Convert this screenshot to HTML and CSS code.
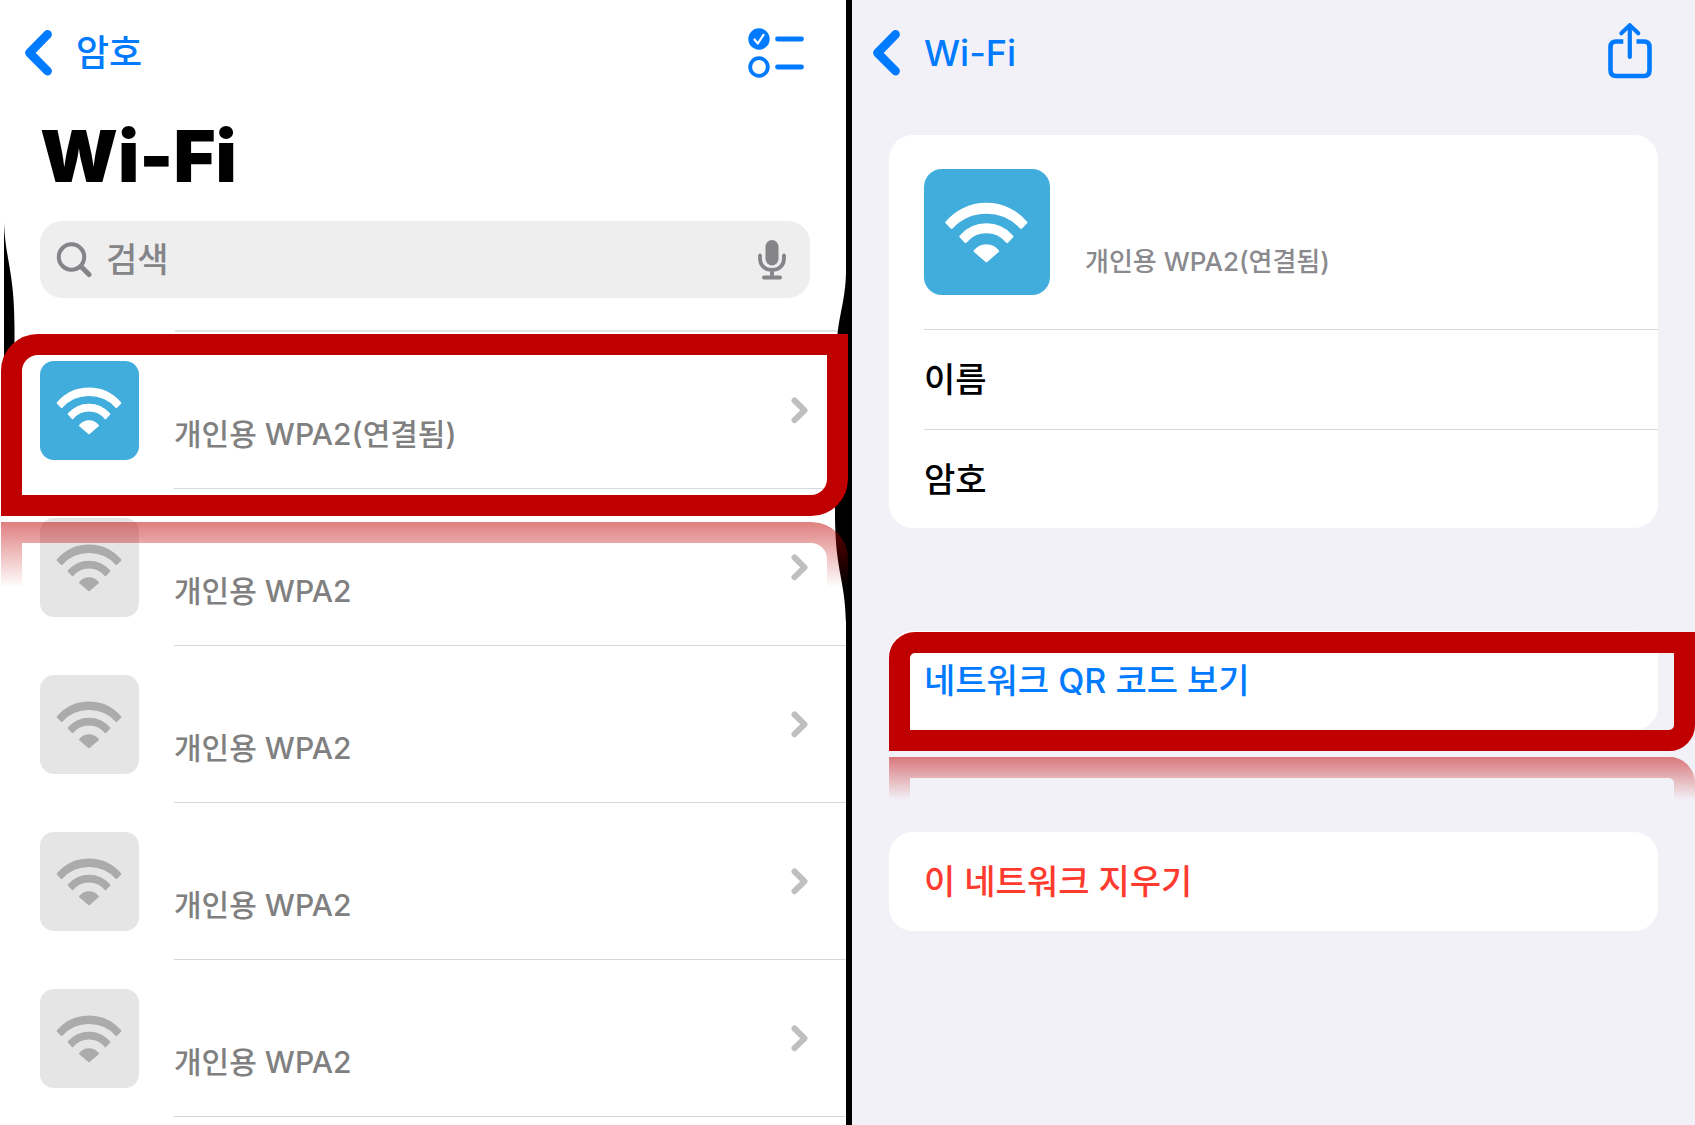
FILE: index.html
```
<!DOCTYPE html>
<html lang="ko">
<head>
    <meta charset="UTF-8">
    <meta name="viewport" content="width=device-width, initial-scale=1.0">
    <title>Wi-Fi 암호</title>
    <link rel="stylesheet" href="styles.css">
</head>
<body>
    <svg class="symbols" aria-hidden="true">
        <symbol id="icon-wifi" viewBox="0 0 99 99">
            <path d="M17.700 42A41 41 0 0 1 80.300 42L76.300 46A37.300 37.300 0 0 0 21.700 46Z"/>
            <path d="M28.700 53A26.700 26.700 0 0 1 69.300 53L65.300 57.200A21.200 21.200 0 0 0 32.700 57.200Z"/>
            <path d="M40 64.500A11.500 11.500 0 0 1 58 64.500L49 72.300Z"/>
        </symbol>
        <symbol id="icon-back" viewBox="0 0 27 46">
            <path d="M22.500 4.500L4.500 22.800L22.500 41" fill="none" stroke="currentColor" stroke-width="8.800" stroke-linecap="round" stroke-linejoin="round"/>
        </symbol>
        <symbol id="icon-next" viewBox="0 0 17 27">
            <path d="M3.500 3.500L13.500 13.300L3.500 23.200" fill="none" stroke="currentColor" stroke-width="6" stroke-linecap="round" stroke-linejoin="round"/>
        </symbol>
    </svg>

    <main class="screens">
        <!-- 네트워크 목록 -->
        <section class="screen screen-list">
            <nav class="navbar">
                <a class="back" href="#">
                    <svg class="back-icon"><use href="#icon-back"/></svg>
                    <span>암호</span>
                </a>
                <button class="nav-button" type="button" aria-label="선택">
                    <svg width="56" height="50" viewBox="0 0 56 50" fill="none" stroke="currentColor" stroke-linecap="round" stroke-linejoin="round">
                        <circle cx="11" cy="11" r="10.700" fill="currentColor" stroke="none"/>
                        <path d="M6.500 11.500L9.800 15.500L15.500 6.800" stroke="#fff" stroke-width="2.200"/>
                        <circle cx="11" cy="39" r="8.800" stroke-width="3.800"/>
                        <path d="M29.500 11H53.500M29.500 39H53.500" stroke-width="4.800"/>
                    </svg>
                </button>
            </nav>

            <h1>Wi-Fi</h1>

            <label class="search">
                <svg width="36" height="36" viewBox="0 0 36 36" fill="none" stroke="currentColor" stroke-linecap="round">
                    <circle cx="15.500" cy="15" r="12.700" stroke-width="4"/>
                    <path d="M25 24.500L33 32.500" stroke-width="5"/>
                </svg>
                <input type="search" placeholder="검색" aria-label="검색">
                <svg width="28" height="40" viewBox="0 0 28 40" fill="none" stroke="currentColor" stroke-linecap="round">
                    <rect x="7.500" y="0" width="13" height="25.500" rx="6.500" fill="currentColor" stroke="none"/>
                    <path d="M2 15.500V18.500C2 25.500 7 29.800 14 29.800C21 29.800 26 25.500 26 18.500V15.500M14 31V37" stroke-width="3.800"/>
                    <path d="M6 37.500H22" stroke-width="4"/>
                </svg>
            </label>

            <ul class="networks">
                <li class="network">
                    <a href="#">
                        <svg class="tile tile-on"><use href="#icon-wifi"/></svg>
                        <span class="network-body">
                            <span class="network-type">개인용 WPA2(연결됨)</span>
                            <svg class="next-icon"><use href="#icon-next"/></svg>
                        </span>
                    </a>
                    <div class="marker marker-network"></div>
                </li>
                <li class="network">
                    <a href="#">
                        <svg class="tile"><use href="#icon-wifi"/></svg>
                        <span class="network-body">
                            <span class="network-type">개인용 WPA2</span>
                            <svg class="next-icon"><use href="#icon-next"/></svg>
                        </span>
                    </a>
                </li>
                <li class="network">
                    <a href="#">
                        <svg class="tile"><use href="#icon-wifi"/></svg>
                        <span class="network-body">
                            <span class="network-type">개인용 WPA2</span>
                            <svg class="next-icon"><use href="#icon-next"/></svg>
                        </span>
                    </a>
                </li>
                <li class="network">
                    <a href="#">
                        <svg class="tile"><use href="#icon-wifi"/></svg>
                        <span class="network-body">
                            <span class="network-type">개인용 WPA2</span>
                            <svg class="next-icon"><use href="#icon-next"/></svg>
                        </span>
                    </a>
                </li>
                <li class="network">
                    <a href="#">
                        <svg class="tile"><use href="#icon-wifi"/></svg>
                        <span class="network-body">
                            <span class="network-type">개인용 WPA2</span>
                            <svg class="next-icon"><use href="#icon-next"/></svg>
                        </span>
                    </a>
                </li>
            </ul>

            <!-- 가장자리의 검은 곡선 -->
            <svg class="edge edge-left" width="12" height="136" viewBox="0 0 12 136" aria-hidden="true">
                <path d="M0 0C1 36 10.500 50 10.500 105V136H0Z"/>
            </svg>
            <svg class="edge edge-right" width="11" height="350" viewBox="0 0 11 350" aria-hidden="true">
                <path d="M11 0C10.500 28 4 42 2 68L0 150V240C0 300 10 305 11 350Z"/>
            </svg>
        </section>

        <!-- 네트워크 상세 -->
        <section class="screen screen-detail">
            <nav class="navbar">
                <a class="back" href="#">
                    <svg class="back-icon"><use href="#icon-back"/></svg>
                    <span>Wi-Fi</span>
                </a>
                <button class="nav-button" type="button" aria-label="공유">
                    <svg width="44" height="62" viewBox="0 0 44 62" fill="none" stroke="currentColor">
                        <path d="M15.300 19.500H8Q2.500 19.500 2.500 25V48Q2.500 54 8 54H36Q41.500 54 41.500 48V25Q41.500 19.500 36 19.500H28.500" stroke-width="4.600"/>
                        <path d="M21.800 3.500V35" stroke-width="4.200" stroke-linecap="round"/>
                        <path d="M13.300 11.300L21.800 3.200L30.300 11.300" stroke-width="4" stroke-linecap="round" stroke-linejoin="round"/>
                    </svg>
                </button>
            </nav>

            <div class="cards">
                <div class="card card-info">
                    <div class="summary">
                        <svg class="tile tile-on tile-large"><use href="#icon-wifi"/></svg>
                        <span class="summary-type">개인용 WPA2(연결됨)</span>
                    </div>
                    <div class="field">이름</div>
                    <div class="field">암호</div>
                </div>

                <div class="card card-qr">
                    <button class="action" type="button">네트워크 QR 코드 보기</button>
                    <div class="marker marker-qr"></div>
                </div>

                <div class="card">
                    <button class="action action-danger" type="button">이 네트워크 지우기</button>
                </div>
            </div>
        </section>
    </main>
</body>
</html>
```

FILE: styles.css
```
:root {
    --blue: #007aff;
    --red: #ff3b30;
    --marker: #c00000;
    --tile-blue: #41addc;
    --tile-gray: #e5e5e5;
    --line: #d8d8da;
    --panel: #f2f1f7;
}

* {
    box-sizing: border-box;
}

body {
    margin: 0;
    background: #000;
    color: #000;
    font-family: Inter, "Noto Sans CJK KR", sans-serif;
    font-size: 34px;
    font-weight: 500;
}

button,
input {
    font: inherit;
    color: inherit;
    border: 0;
    padding: 0;
    background: none;
}

button {
    cursor: pointer;
}

a {
    color: inherit;
    text-decoration: none;
}

.symbols {
    display: none;
}

.screens {
    display: grid;
    grid-template-columns: 846fr 843fr;
    column-gap: 6px;
    min-height: 100vh;
}

.screen {
    position: relative;
    min-width: 0;
}

.screen-list {
    background: #fff;
}

.screen-detail {
    background: var(--panel);
}

/* 상단 바 */
.navbar {
    display: flex;
    align-items: center;
    justify-content: space-between;
    height: 104px;
    padding: 2px 42px 0 25px;
    color: var(--blue);
}

.screen-detail .navbar {
    padding-left: 21px;
    padding-right: 43px;
}

.back {
    display: flex;
    align-items: center;
    gap: 24px;
    font-size: 36px;
    line-height: 48px;
}

.back-icon {
    width: 27px;
    height: 46px;
}

.nav-button svg {
    display: block;
}

h1 {
    margin: 0;
    padding-left: 40px;
    font-size: 72px;
    line-height: 104px;
    font-weight: 900;
}

/* 검색창 */
.search {
    display: flex;
    align-items: center;
    gap: 14px;
    height: 77px;
    margin: 13px 36px 32px 40px;
    padding: 0 24px 0 16px;
    border-radius: 22px;
    background: #eee;
    color: #848489;
}

.search input {
    flex: 1;
    min-width: 0;
    outline: none;
}

.search input::placeholder {
    color: #848489;
}

/* 목록 */
.networks {
    margin: 0;
    padding: 0;
    list-style: none;
}

.networks::before {
    content: '';
    display: block;
    height: 2px;
    margin-left: 175px;
    background: #e4e4e4;
}

.network {
    position: relative;
}

.network a {
    display: flex;
    align-items: center;
    gap: 35px;
    padding-left: 40px;
}

.tile {
    flex: none;
    width: 99px;
    height: 99px;
    border-radius: 14px;
    background: var(--tile-gray);
    fill: #ababab;
    stroke: #ababab;
    stroke-width: 2px;
    stroke-linejoin: round;
}

.tile-on {
    background: var(--tile-blue);
    fill: #fff;
    stroke: #fff;
}

.tile-large {
    width: 126px;
    height: 126px;
    border-radius: 18px;
}

.network-body {
    flex: 1;
    display: flex;
    align-items: center;
    justify-content: space-between;
    height: 157px;
    padding-right: 38px;
    border-bottom: 1px solid var(--line);
}

.network-type {
    padding-top: 48px;
    font-size: 30px;
    line-height: 48px;
    color: #808080;
}

.next-icon {
    width: 17px;
    height: 27px;
    color: #bfbfbf;
}

/* 카드 */
.cards {
    padding: 31px 37px 0;
}

.card {
    position: relative;
    border-radius: 24px;
    background: #fff;
}

.card-info {
    margin-bottom: 103px;
}

.card-qr {
    margin-bottom: 102px;
}

.summary,
.field {
    display: flex;
    align-items: center;
    margin-left: 35px;
}

.summary {
    gap: 35px;
    height: 195px;
    border-bottom: 1px solid var(--line);
}

.summary-type {
    padding-top: 60px;
    font-size: 26px;
    line-height: 60px;
    color: #8a8a8e;
}

.field {
    height: 99px;
    padding-bottom: 4px;
}

.field + .field {
    border-top: 1px solid var(--line);
}

.action {
    display: block;
    width: 100%;
    height: 99px;
    padding: 0 0 4px 35px;
    text-align: left;
    color: var(--blue);
}

.action-danger {
    color: var(--red);
}

/* 빨간 강조 테두리와 반사 */
.marker {
    position: absolute;
    z-index: 2;
    border: 21px solid var(--marker);
    pointer-events: none;
    -webkit-box-reflect: below 6px linear-gradient(transparent 64%, rgba(0, 0, 0, 0.5));
}

.marker-network {
    top: 2px;
    left: 1px;
    right: -2px;
    height: 182px;
    border-radius: 37px 0;
}

.marker-qr {
    top: 1px;
    left: 0;
    right: -37px;
    height: 119px;
    border-radius: 26px 0;
}

.edge {
    position: absolute;
    z-index: 1;
}

.edge-left {
    top: 222px;
    left: 4px;
}

.edge-right {
    top: 272px;
    right: 0;
}
```
